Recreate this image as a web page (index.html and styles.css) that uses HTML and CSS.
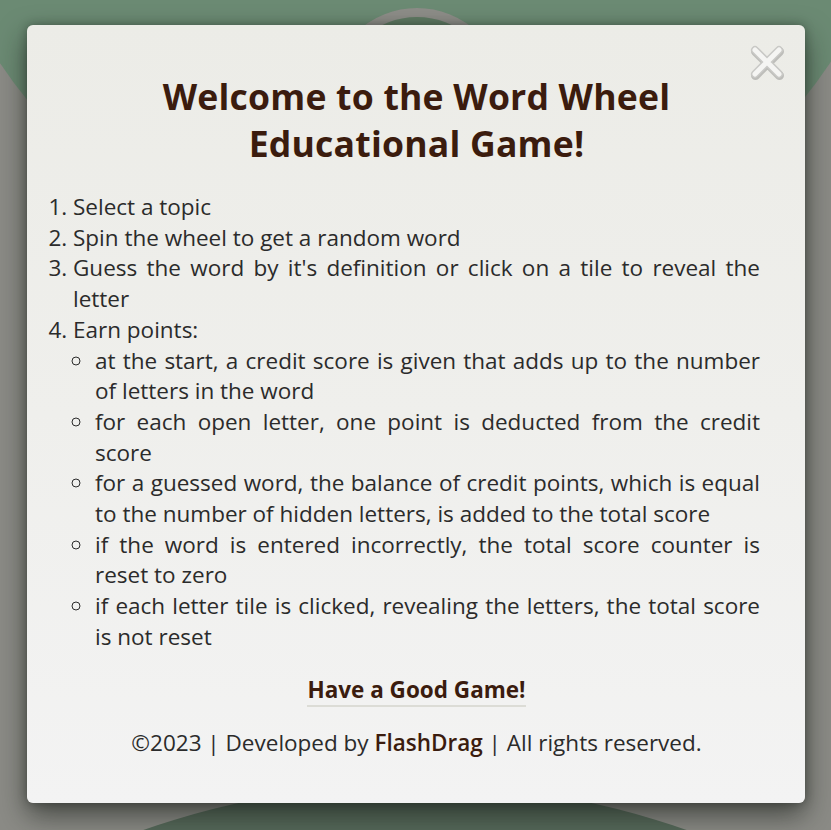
FILE: index.html
```html
<!DOCTYPE html>
<html lang="en">
<head>
<meta charset="utf-8">
<title>Word Wheel</title>
<link rel="stylesheet" href="styles.css">
</head>
<body>
<div class="backdrop">
  <div class="bg-top"></div>
  <div class="bg-bottom"></div>
  <div class="bg-ring"></div>
</div>
<div class="modal">
  <button class="close" aria-label="Close">
    <svg width="40" height="40" viewBox="0 0 40 40">
      <g stroke-linecap="round">
        <path d="M8 8 L32 32 M32 8 L8 32" stroke="#a9a9a6" stroke-width="9" fill="none" transform="translate(0.5,1.5)" opacity="0.7"/>
        <path d="M8 8 L32 32 M32 8 L8 32" stroke="#c9c9c6" stroke-width="8" fill="none"/>
        <path d="M8 8 L32 32 M32 8 L8 32" stroke="#f5f5f3" stroke-width="5" fill="none"/>
      </g>
    </svg>
  </button>
  <h1 class="title">Welcome to the Word Wheel Educational Game!</h1>
  <ol class="rules">
    <li>Select a topic</li>
    <li>Spin the wheel to get a random word</li>
    <li>Guess the word by it's definition or click on a tile to reveal the letter</li>
    <li>Earn points:
      <ul class="sub">
        <li>at the start, a credit score is given that adds up to the number of letters in the word</li>
        <li>for each open letter, one point is deducted from the credit score</li>
        <li>for a guessed word, the balance of credit points, which is equal to the number of hidden letters, is added to the total score</li>
        <li>if the word is entered incorrectly, the total score counter is reset to zero</li>
        <li>if each letter tile is clicked, revealing the letters, the total score is not reset</li>
      </ul>
    </li>
  </ol>
  <p class="wish"><span class="wish-text">Have a Good Game!</span></p>
  <p class="footer">©2023 | Developed by <span class="brand">FlashDrag</span> | All rights reserved.</p>
</div>
</body>
</html>
```
FILE: styles.css
```css
html, body {
  margin: 0;
  padding: 0;
}
body {
  width: 831px;
  height: 830px;
  overflow: hidden;
  background: #6b8a73;
  font-family: "Open Sans", "Noto Sans", sans-serif;
  position: relative;
}
.backdrop {
  position: absolute;
  inset: 0;
  overflow: hidden;
  background: #8b8b86;
}
.bg-top {
  position: absolute;
  left: -84px;
  top: -713px;
  width: 998px;
  height: 998px;
  border-radius: 50%;
  background: #6b8a73;
}
.bg-bottom {
  position: absolute;
  left: -410px;
  top: 784px;
  width: 1650px;
  height: 1650px;
  border-radius: 50%;
  background: #56695a;
}
.bg-ring {
  position: absolute;
  left: 329px;
  top: 8px;
  width: 158px;
  height: 158px;
  border-radius: 50%;
  border: 9px solid #8d8d88;
  background: #5f7a63;
}
.modal {
  position: absolute;
  left: 27px;
  top: 25px;
  width: 778px;
  height: 778px;
  box-sizing: border-box;
  padding: 48px 45px 0 46px;
  border-radius: 6px;
  background: linear-gradient(180deg, #ecece7 0%, #efefec 50%, #f3f3f3 100%);
  box-shadow: 0 12px 28px rgba(20, 25, 20, 0.6), 0 0 10px rgba(20, 25, 20, 0.35);
  color: #2b2b2b;
}
.close {
  position: absolute;
  top: 17px;
  right: 18px;
  width: 40px;
  height: 40px;
  padding: 0;
  border: 0;
  background: none;
}
.close svg {
  display: block;
}
.title {
  margin: 0 auto 0;
  width: 560px;
  text-align: center;
  font-size: 35.6px;
  line-height: 47px;
  font-weight: 700;
  color: #3b1c0e;
  letter-spacing: 0.2px;
}
.rules {
  margin: 25px 0 0;
  padding: 0;
  font-size: 22.5px;
  line-height: 30.7px;
  text-align: justify;
}
.sub {
  margin: 0;
  padding-left: 22px;
  list-style-type: circle;
}
.wish {
  margin: 22px 0 0;
  text-align: center;
  font-size: 22.5px;
  line-height: 30.7px;
}
.wish-text {
  font-weight: 700;
  color: #3b1c0e;
  border-bottom: 2px solid #dcdcd6;
}
.footer {
  margin: 23px 0 0;
  text-align: center;
  font-size: 22.5px;
  line-height: 30.7px;
  color: #2b2b2b;
}
.brand {
  color: #3b1c0e;
  font-weight: 600;
}
```
